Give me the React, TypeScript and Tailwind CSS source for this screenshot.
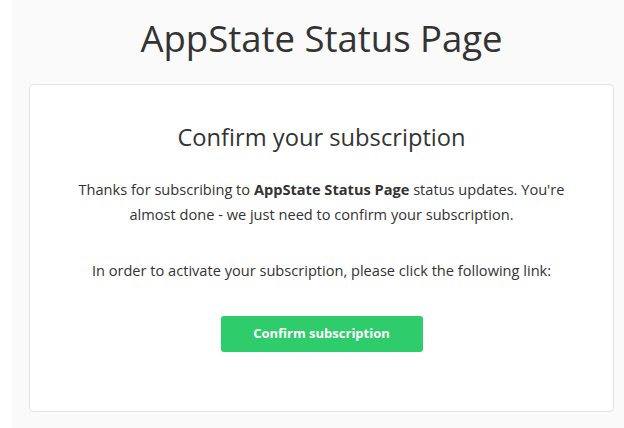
export default function App() {
  return (
    <div className="flex min-h-[428px] bg-white" style={{ fontFamily: '"Open Sans", "Noto Sans", sans-serif' }}>
      <div className="w-[12px] shrink-0 bg-white" />
      <main className="flex-1 bg-[#fafafa] pl-[17px] pr-[10px] pt-[14px] pb-[16px] text-[#333]">
        <h1 className="text-center text-[36.5px] leading-[48px] font-normal">AppState Status Page</h1>
        <section className="mt-[22px] rounded-[4px] border border-[#e3e3e3] bg-white px-4 pt-[36px] pb-[59px] text-center">
          <h2 className="text-[23.7px] leading-[32px] font-normal">Confirm your subscription</h2>
          <p className="mx-auto mt-[24px] max-w-[520px] text-[14.6px] leading-[25px]">
            Thanks for subscribing to <strong className="font-bold">AppState Status Page</strong> status updates. You're
            almost done - we just need to confirm your subscription.
          </p>
          <p className="mt-[31px] text-[14.6px] leading-[25px]">
            In order to activate your subscription, please click the following link:
          </p>
          <a
            href="#"
            className="mx-auto mt-[33px] flex h-[36px] w-[202px] items-center justify-center rounded-[3px] bg-[#2ecc6b] text-[13px] font-bold text-white"
          >
            Confirm subscription
          </a>
        </section>
      </main>
    </div>
  );
}
